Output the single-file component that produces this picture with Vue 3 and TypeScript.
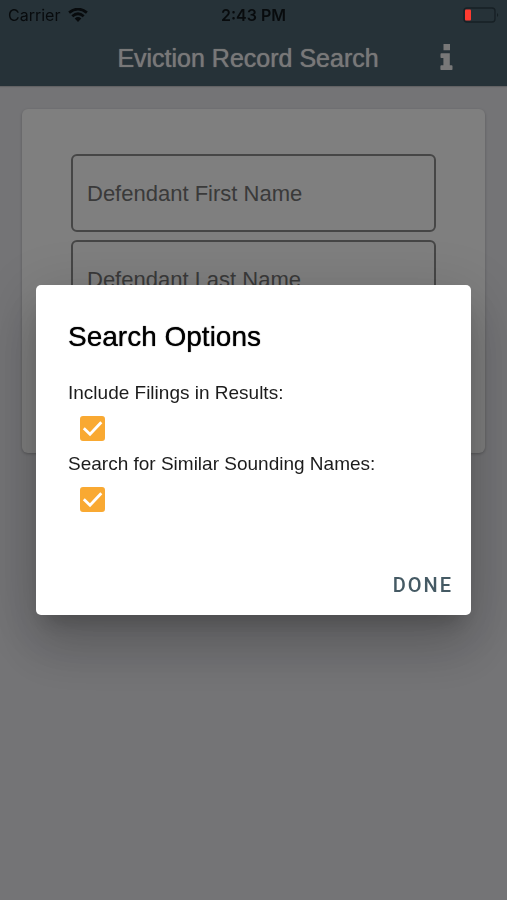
<script setup lang="ts">
import { ref } from 'vue'

interface SearchOption {
  id: string
  label: string
  checked: boolean
}

const firstName = ref('')
const lastName = ref('')
const dialogOpen = ref(true)
const options = ref<SearchOption[]>([
  { id: 'include-filings', label: 'Include Filings in Results:', checked: true },
  { id: 'similar-names', label: 'Search for Similar Sounding Names:', checked: true },
])
</script>

<template>
  <div class="screen">
    <div class="status-bar">
      <div class="carrier">
        <span>Carrier</span>
        <svg class="wifi" viewBox="0 0 20 14" aria-hidden="true">
          <path d="M10 14 L6.7 10.5 Q10 7.7 13.3 10.5 Z" />
          <path d="M4.3 8.2 Q10 3.4 15.7 8.2" fill="none" stroke="currentColor" stroke-width="2.8" />
          <path d="M1.1 4.7 Q10 -2.4 18.9 4.7" fill="none" stroke="currentColor" stroke-width="2.8" />
        </svg>
      </div>
      <span class="clock">2:43 PM</span>
      <svg class="battery" viewBox="0 0 36 16" aria-hidden="true">
        <rect x="1" y="1" width="31" height="14" rx="3" fill="none" stroke="#172025" stroke-width="1.4" />
        <rect x="2" y="2.500" width="6" height="11" rx="1" fill="#ff3b30" />
        <path d="M34 6 Q36.5 8 34 10 Z" fill="#172025" />
      </svg>
    </div>

    <header class="app-bar">
      <h1 class="app-title">Eviction Record Search</h1>
      <button class="info" type="button" aria-label="Information">
        <svg viewBox="0 0 13 26" aria-hidden="true">
          <path d="M3.500 0h6.500v6.200H3.500zM1.300 9.300h8.500v12h1.700q1 0 1 1v3q0 .7-.8.7H1.200q-.8 0-.8-.7v-3q0-1 1-1h2v-7.300H1.300q-.8 0-.8-.8v-3q0-.9.8-.9z" />
        </svg>
      </button>
    </header>

    <main class="content">
      <form class="card" @submit.prevent>
        <input v-model="firstName" class="field" type="text" placeholder="Defendant First Name" aria-label="Defendant First Name" />
        <input v-model="lastName" class="field" type="text" placeholder="Defendant Last Name" aria-label="Defendant Last Name" />
      </form>
    </main>

    <div v-if="dialogOpen" class="overlay">
      <section class="dialog" role="dialog" aria-modal="true" aria-labelledby="dialog-title">
        <h2 id="dialog-title" class="dialog-title">Search Options</h2>
        <div v-for="option in options" :key="option.id" class="option">
          <label :for="option.id">{{ option.label }}</label>
          <span class="check">
            <input :id="option.id" v-model="option.checked" type="checkbox" />
            <svg v-if="option.checked" viewBox="0 0 25 25" aria-hidden="true">
              <path d="M3.800 12.300 L10 18.300 L21.300 6.200" />
            </svg>
          </span>
        </div>
        <div class="actions">
          <button class="done" type="button" @click="dialogOpen = false">DONE</button>
        </div>
      </section>
    </div>
  </div>
</template>

<style>
body {
  background: #e8e8ed;
}
</style>

<style scoped>
.screen {
  min-height: 100vh;
  box-sizing: border-box;
  background: #e8e8ed;
  font-family: "Liberation Sans", Arial, sans-serif;
}

.status-bar {
  position: fixed;
  inset: 0 0 auto;
  z-index: 3;
  display: grid;
  grid-template-columns: 1fr auto 1fr;
  align-items: center;
  height: 29px;
  padding: 0 8px;
  font-family: Inter, sans-serif;
  font-size: 16px;
  color: #080b0d;
}

.carrier {
  display: flex;
  align-items: center;
  gap: 8px;
}

.wifi {
  width: 20px;
  height: 14px;
  fill: currentColor;
}

.clock {
  font-weight: 600;
}

.battery {
  justify-self: end;
  width: 36px;
  height: 16px;
}

.app-bar {
  display: grid;
  grid-template-columns: 1fr auto 1fr;
  align-items: center;
  height: 57px;
  padding: 29px 19px 0 8px;
  background: #4c6470;
  box-shadow: 0 1px 1px rgba(0, 0, 0, 0.15);
}

.app-title {
  grid-column: 2;
  margin: 0;
  font-size: 25px;
  font-weight: 400;
  line-height: 32px;
  color: #f0f0f0;
  text-shadow: 0 0 1px #f0f0f0;
  white-space: nowrap;
}

.info {
  justify-self: end;
  display: flex;
  margin: 0;
  padding: 0 35px 2px 8px;
  border: 0;
  background: none;
}

.info svg {
  width: 13px;
  height: 26px;
  fill: #f0f0f0;
}

.content {
  padding: 23px 22px;
}

.card {
  display: flex;
  flex-direction: column;
  gap: 8px;
  padding: 45px 49px 135px;
  border-radius: 6px;
  background: #fff;
  box-shadow: 0 1px 3px rgba(0, 0, 0, 0.25);
}

.field {
  box-sizing: border-box;
  width: 100%;
  height: 78px;
  padding: 2px 14px 0;
  border: 2px solid #8c8c8c;
  border-radius: 6px;
  background: transparent;
  font: 22px "Liberation Sans", Arial, sans-serif;
  color: #222;
}

.field::placeholder {
  color: #747474;
  opacity: 1;
}

.overlay {
  position: fixed;
  inset: 0;
  z-index: 2;
  display: flex;
  align-items: center;
  justify-content: center;
  padding: 0 36px;
  background: rgba(0, 0, 0, 0.5);
}

.dialog {
  box-sizing: border-box;
  width: 100%;
  max-width: 560px;
  padding: 32px 8px 8px 32px;
  border-radius: 5px;
  background: #fff;
  box-shadow:
    0 15px 20px -9px rgba(0, 0, 0, 0.2),
    0 32px 51px 4px rgba(0, 0, 0, 0.14),
    0 12px 62px 11px rgba(0, 0, 0, 0.12);
}

.dialog-title {
  margin: 0 0 24px;
  font-size: 28px;
  font-weight: 400;
  line-height: 40px;
  color: #000;
  text-shadow: 0 0 1px #000;
}

.option {
  display: flex;
  flex-direction: column;
  font-size: 19px;
  line-height: 24px;
  color: #1c1c1c;
}

.check {
  position: relative;
  width: 25px;
  height: 25px;
  margin: 11px 12px;
}

.check input {
  appearance: none;
  display: block;
  width: 25px;
  height: 25px;
  margin: 0;
  border: 2px solid #757575;
  border-radius: 3px;
}

.check input:checked {
  border-color: #f9a932;
  background: #f9a932;
}

.check svg {
  position: absolute;
  inset: 0;
  fill: none;
  stroke: #fff;
  stroke-width: 2.800;
  pointer-events: none;
}

.actions {
  display: flex;
  justify-content: flex-end;
  margin-top: 40px;
}

.done {
  padding: 12px 10px;
  border: 0;
  background: none;
  font: 500 20px/20px Roboto, sans-serif;
  letter-spacing: 2px;
  color: #455a64;
}
</style>
